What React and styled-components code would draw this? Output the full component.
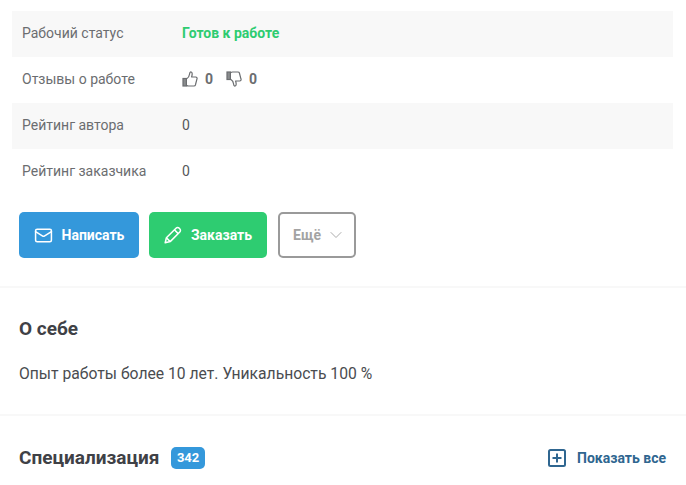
import React from 'react'
import styled, { createGlobalStyle } from 'styled-components'
import { Mail, ChevronDown } from 'lucide-react'

const GlobalStyle = createGlobalStyle`
  html, body {
    margin: 0;
    padding: 0;
    background: #fff;
    font-family: Roboto, "Liberation Sans", sans-serif;
    color: #3f4146;
  }
`

const Page = styled.div`
  width: 686px;
  height: 485px;
  overflow: hidden;
  padding-top: 11px;
  box-sizing: border-box;
`

const InfoTable = styled.div`
  margin: 0 13px 0 12px;
`

const Row = styled.div`
  display: flex;
  align-items: center;
  height: 46px;
  padding: 0 0 2px 10px;
  box-sizing: border-box;
  font-size: 14px;
  color: #6b6d70;
  &:nth-child(odd) {
    background: #f8f8f8;
  }
`

const Label = styled.div`
  width: 160px;
`

const Status = styled.div`
  font-weight: 700;
  color: #2ecc71;
`

const Value = styled.div`
  color: #55575a;
`

const Votes = styled.div`
  display: flex;
  align-items: center;
  font-weight: 700;
  color: #6b6d70;
`

const VoteCount = styled.span`
  margin: 0 13px 0 7px;
`

const Actions = styled.div`
  display: flex;
  gap: 10px;
  padding: 17px 19px 28px;
  border-bottom: 2px solid #f8f8f8;
`

const Button = styled.div`
  display: flex;
  align-items: center;
  justify-content: center;
  gap: 9px;
  box-sizing: border-box;
  width: ${p => p.$width}px;
  height: 46px;
  border-radius: 5px;
  background: ${p => p.$color};
  color: #fff;
  font-size: 14px;
  font-weight: 700;
`

const GhostButton = styled(Button)`
  justify-content: flex-start;
  padding-left: 13px;
  background: #fff;
  border: 2px solid #9a9a9a;
  color: #a3a3a3;
  gap: 5px;
  margin-left: 1px;
`

const About = styled.section`
  padding: 30px 19px 30px;
  border-bottom: 2px solid #f8f8f8;
`

const SectionTitle = styled.h2`
  margin: 0;
  font-size: 19px;
  line-height: 22px;
  font-weight: 700;
  color: #3f4146;
`

const AboutText = styled.p`
  margin: 24px 0 0;
  font-size: 15.7px;
  line-height: 20px;
  color: #4a4c50;
`

const SpecRow = styled.section`
  display: flex;
  align-items: center;
  padding: 31px 19px 0;
`

const Badge = styled.span`
  margin-left: 12px;
  padding: 0 5.5px;
  height: 22px;
  line-height: 22px;
  border-radius: 5px;
  background: #3498db;
  color: #fff;
  font-size: 13px;
  font-weight: 700;
`

const ShowAll = styled.div`
  margin-left: auto;
  display: flex;
  align-items: center;
  gap: 11px;
  font-size: 14px;
  font-weight: 700;
  color: #2f6690;
  transform: translateX(-1px);
`

const ThumbUp = () => (
  <svg width="16" height="16" viewBox="0 0 16 16" fill="none" stroke="#6b6d70" strokeWidth="1.2">
    <rect x="1" y="7.5" width="3.4" height="7.5" fill="#8a8c8e" />
    <path d="M4.4 8 C6 7 7.4 5 7.6 3 C7.7 1.4 8.4 0.8 9.2 1 C10.5 1.4 10.4 3.6 9.6 6 L13.6 6 C15 6 15.4 7.2 14.9 8.2 L13.4 14 C13.2 14.7 12.6 15 12 15 L6.6 15 C5.6 15 5 14.6 4.4 14.2" strokeLinejoin="round" />
  </svg>
)

const ThumbDown = () => (
  <svg width="16" height="16" viewBox="0 0 16 16" fill="none" stroke="#6b6d70" strokeWidth="1.2">
    <rect x="1" y="1" width="3.4" height="7.5" fill="#8a8c8e" />
    <path d="M4.4 8 C6 9 7.4 11 7.6 13 C7.7 14.6 8.4 15.2 9.2 15 C10.5 14.6 10.4 12.4 9.6 10 L13.6 10 C15 10 15.4 8.8 14.9 7.8 L13.4 2 C13.2 1.3 12.6 1 12 1 L6.6 1 C5.6 1 5 1.4 4.4 1.8" strokeLinejoin="round" />
  </svg>
)

const MailIcon = () => <Mail size={19} strokeWidth={1.9} />

const PencilIcon = () => (
  <svg width="18" height="18" viewBox="0 0 18 18" fill="none" stroke="#fff" strokeWidth="1.5" strokeLinejoin="round">
    <path d="M1.2 16.8 L2.4 11.8 L12 2.2 C12.9 1.3 14.3 1.3 15.3 2.3 L15.7 2.7 C16.7 3.7 16.7 5.1 15.8 6 L6.2 15.6 Z" />
    <path d="M10.4 3.8 L14.2 7.6 M2.4 11.8 L6.2 15.6" />
  </svg>
)

const PlusBox = () => (
  <svg width="18" height="18" viewBox="0 0 18 18" fill="none" stroke="#2f6690" strokeWidth="2">
    <rect x="1" y="1" width="16" height="16" rx="1.5" />
    <path d="M9 4.5 V13.5 M4.5 9 H13.5" />
  </svg>
)

export default function App() {
  return (
    <Page>
      <GlobalStyle />
      <InfoTable>
        <Row>
          <Label>Рабочий статус</Label>
          <Status>Готов к работе</Status>
        </Row>
        <Row>
          <Label>Отзывы о работе</Label>
          <Votes>
            <ThumbUp />
            <VoteCount>0</VoteCount>
            <ThumbDown />
            <VoteCount>0</VoteCount>
          </Votes>
        </Row>
        <Row>
          <Label>Рейтинг автора</Label>
          <Value>0</Value>
        </Row>
        <Row>
          <Label>Рейтинг заказчика</Label>
          <Value>0</Value>
        </Row>
      </InfoTable>
      <Actions>
        <Button $width={120} $color="#3498db">
          <MailIcon />
          Написать
        </Button>
        <Button $width={118} $color="#2ecc71">
          <PencilIcon />
          Заказать
        </Button>
        <GhostButton $width={78} $color="#fff">
          Ещё
          <ChevronDown size={20} strokeWidth={1.1} />
        </GhostButton>
      </Actions>
      <About>
        <SectionTitle>О себе</SectionTitle>
        <AboutText>Опыт работы более 10 лет. Уникальность 100 %</AboutText>
      </About>
      <SpecRow>
        <SectionTitle>Специализация</SectionTitle>
        <Badge>342</Badge>
        <ShowAll>
          <PlusBox />
          Показать все
        </ShowAll>
      </SpecRow>
    </Page>
  )
}
